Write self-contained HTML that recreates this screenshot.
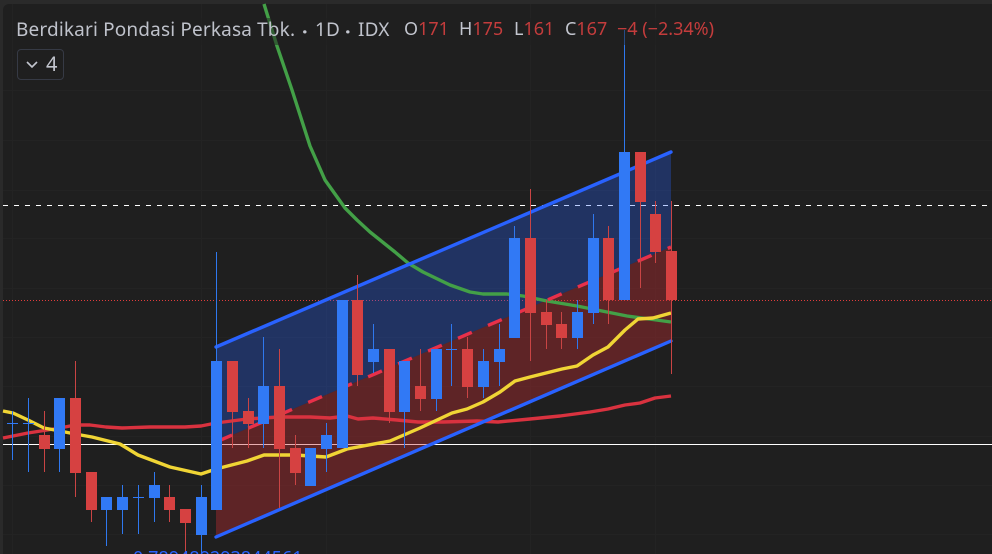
<!DOCTYPE html>
<html lang="en"><head><meta charset="utf-8"><title>Chart</title>
<style>
html,body{margin:0;padding:0;background:#2a2a2a;width:992px;height:554px;overflow:hidden}
body{position:relative;font-family:"Noto Sans","Noto Sans CJK JP","Liberation Sans",sans-serif}
#panel{position:absolute;left:3px;top:4px;width:989px;height:550px;background:#1f1f1f;border-top-left-radius:6px}
#clip{position:absolute;left:0;top:0;width:992px;height:554px;overflow:hidden}
svg{position:absolute;left:0;top:0}
.t{position:absolute;top:17px;font-size:18px;line-height:24px;white-space:nowrap;color:#c3c6cf}
.b{font-size:19px;letter-spacing:.15px;color:#bfc2cb}
.d{top:20px;font-weight:700;font-size:20px}
.r{color:#c43c3c}
#bg{position:absolute;left:14px;top:18px;width:702px;height:27px;background:rgba(31,31,31,.5)}
#badge{position:absolute;left:17px;top:49px;width:45px;height:29px;border:1px solid #363a45;border-radius:4px}
#num{position:absolute;left:133px;top:546px;font-size:18px;line-height:24px;color:#2962ff;white-space:nowrap}
</style></head><body>
<div id="clip">
<div id="panel"></div>
<svg width="992" height="554" viewBox="0 0 992 554">
<path d="M3 90.5H992M3 140.5H992M3 190.5H992M3 238.5H992M3 288.5H992M3 337.5H992M3 386.5H992M3 436.5H992M3 485.5H992M3 534.5H992M12.5 4V554M201.5 4V554M326.5 4V554M530.5 4V554M655.5 4V554" stroke="#232323" stroke-width="1" fill="none"/>
<path d="M3 205.5H992" stroke="#fff" stroke-width="1" stroke-dasharray="5 6" fill="none"/>
<path d="M3 444.5H992" stroke="#fff" stroke-width="1" fill="none"/>
<path d="M3 300.5H992" stroke="#e13c3c" stroke-width="1" stroke-dasharray="1 2" fill="none"/>
<path d="M216 347L671 152V247L216 442Z" fill="#2962ff" fill-opacity=".3"/>
<path d="M216 442L671 247V341L216 537Z" fill="#c62d33" fill-opacity=".38"/>
<g fill="none" stroke-width="3.4" stroke-linejoin="round" stroke-linecap="butt">
<path d="M264 4L277 46L292 90L310 146L325 180L345 208L357 220L370 232L395 252L408 263L423 272L450 285L470 292L483 294L507 294L523 296L547 301L577 306L607 312L627 316L671 322" stroke="#43a047"/>
<path d="M3 438L28 433L60 428L75 425L90 425L106 427L122 428L150 427L185 427L201 426L216 423L247 419L263 418L279 417L310 417L330 418L347 416L358 419L373 418L397 420L418 422L443 422L477 421L498 422L530 419L560 416L590 412L608 409L625 405L640 403L655 398L671 396" stroke="#d9323f"/>
<path d="M3 411L13 413L28 420L44 428L60 431L75 434L92 437L120 444L138 455L170 467L201 474L216 469L247 461L264 455L295 455L326 457L347 449L390 441L420 428L452 413L467 409L483 402L500 392L515 381L530 377L562 369L577 366L593 355L608 347L625 330L638 319L653 318L671 313" stroke="#f0d535"/>
</g>
<path d="M216 347L671 152M216 537L671 341" stroke="#2962ff" stroke-width="3.4" stroke-linecap="round" fill="none"/>
<path d="M216 442L671 247" stroke="#e8304a" stroke-width="3.4" stroke-dasharray="15 17.6" stroke-dashoffset="-2.5" fill="none"/>
<path d="M12.5 411V460M28.5 398V472M59.5 449V472M106.5 510V546M122.5 485V534M138.5 485V534M154.5 472V522M201.5 485V554M216.5 252V361M263.5 337V448M326.5 423V472M373.5 324V373M404.5 412V448M436.5 399V411M451.5 324V386M483.5 349V398M499.5 324V386M514.5 226V238M577.5 300V349M593.5 214V324M624.5 30V152" stroke="#2f78ee" stroke-width="1" fill="none"/>
<path d="M44.5 411V472M75.5 361V497M91.5 510V522M169.5 485V522M185.5 523V554M232.5 412V448M248.5 398V448M279.5 349V508M295.5 435V485M357.5 275V386M389.5 412V423M420.5 349V411M467.5 337V398M530.5 189V361M546.5 300V349M561.5 312V349M608.5 226V324M640.5 202V288M655.5 201V263M671.5 201V374" stroke="#c94444" stroke-width="1" fill="none"/>
<path d="M7 423h11v1H7zM23 423h11v1H23zM54 398h11v51H54zM101 497h11v13H101zM117 497h11v13H117zM133 497h11v1H133zM149 485h11v13H149zM196 497h11v38H196zM211 361h11v149H211zM258 386h11v38H258zM305 448h11v38H305zM321 435h11v14H321zM337 300h11v148H337zM368 349h11v13H368zM399 361h11v51H399zM431 349h11v50H431zM446 349h11v1H446zM478 361h11v26H478zM494 349h11v13H494zM509 238h11v100H509zM572 312h11v26H572zM588 238h11v75H588zM619 152h11v148H619z" fill="#3179f5"/>
<path d="M39 435h11v14H39zM70 398h11v75H70zM86 472h11v38H86zM164 497h11v13H164zM180 509h11v14H180zM227 361h11v51H227zM243 411h11v13H243zM274 386h11v63H274zM290 448h11v25H290zM352 300h11v75H352zM384 349h11v63H384zM415 386h11v13H415zM462 349h11v38H462zM525 238h11v75H525zM541 312h11v13H541zM556 324h11v14H556zM603 238h11v62H603zM635 152h11v50H635zM650 214h11v38H650zM666 251h11v49H666z" fill="#d64141"/>
</svg>
<div id="bg"></div>
<div class="t b" style="left:16px">Berdikari Pondasi Perkasa Tbk.</div>
<div class="t d" style="left:302px">·</div>
<div class="t b" style="left:315px">1D</div>
<div class="t d" style="left:345px">·</div>
<div class="t b" style="left:358px">IDX</div>
<div class="t" style="left:404px">O<span class="r">171</span></div>
<div class="t" style="left:459px">H<span class="r">175</span></div>
<div class="t" style="left:514px">L<span class="r">161</span></div>
<div class="t" style="left:565px">C<span class="r">167</span></div>
<div class="t r" style="left:617px">−4 (−2.34%)</div>
<div id="badge"></div>
<svg width="992" height="554" viewBox="0 0 992 554" style="pointer-events:none"><path d="M27 62L32 67L37 62" fill="none" stroke="#c3c6cf" stroke-width="1.6"/></svg>
<div class="t" style="left:46px;top:52px;font-size:20px">4</div>
<div id="num">0.789489293844561</div>
</div>
</body></html>
